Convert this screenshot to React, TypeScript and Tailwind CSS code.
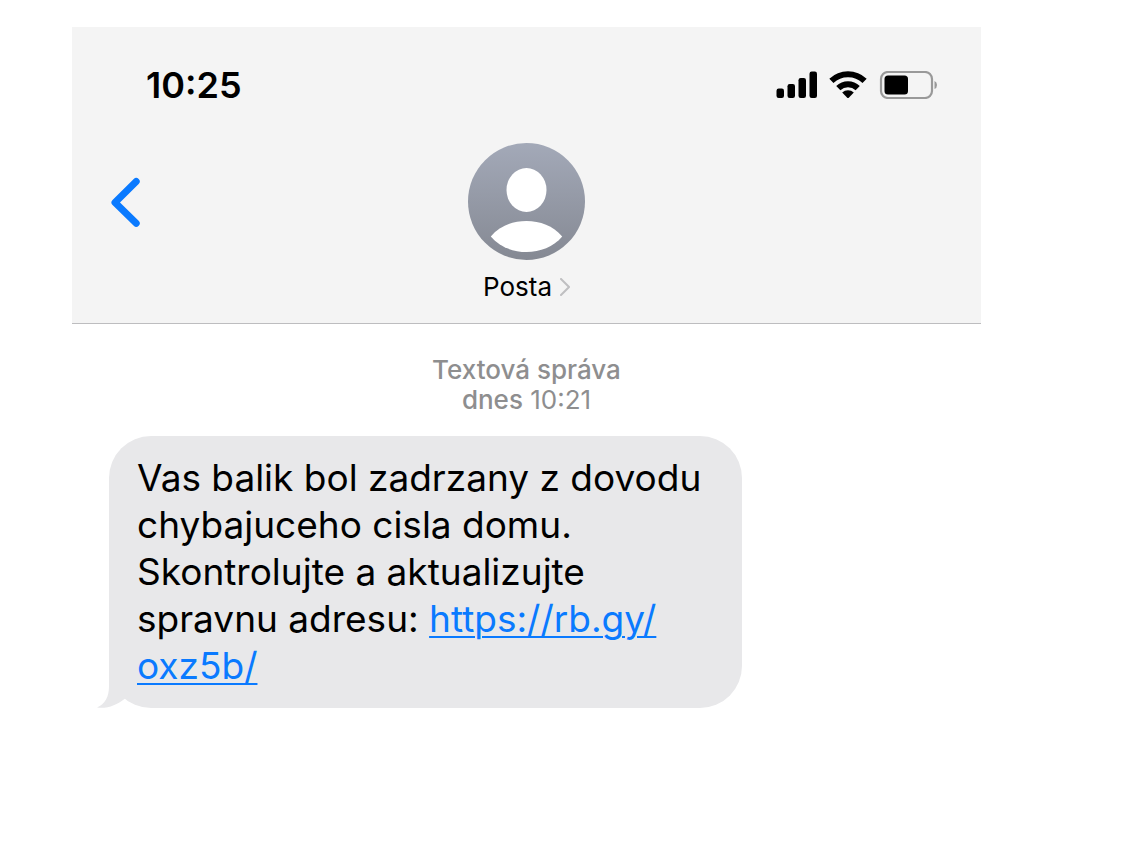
import { useId } from 'react'

function SignalIcon() {
  return (
    <svg width="41" height="28" viewBox="0 0 41 28" fill="#000" aria-hidden="true">
      <rect x="0.5" y="17.5" width="7.5" height="9.5" rx="2.2" />
      <rect x="11.5" y="13" width="7.5" height="14" rx="2.2" />
      <rect x="22.5" y="7" width="7.5" height="20" rx="2.2" />
      <rect x="33.5" y="0.5" width="7.5" height="26.5" rx="2.2" />
    </svg>
  )
}

function WifiIcon() {
  return (
    <svg width="38" height="28" viewBox="0 0 38 28" aria-hidden="true">
      <g fill="none" stroke="#000" strokeWidth="6">
        <path d="M2.4 9.8A24 24 0 0 1 35.6 9.8" />
        <path d="M9.3 17.2A14 14 0 0 1 28.7 17.2" />
      </g>
      <path d="M13.2 21.6A8.6 8.6 0 0 1 24.8 21.6L19.8 26.7Q19 27.4 18.2 26.7Z" />
    </svg>
  )
}

function BatteryIcon() {
  return (
    <svg width="58" height="28" viewBox="0 0 58 28" aria-hidden="true">
      <rect x="2" y="1" width="51" height="26" rx="7" fill="none" stroke="#999" strokeWidth="2.2" />
      <rect x="5.5" y="4.5" width="23.5" height="19" rx="3.5" fill="#000" />
      <path d="M55.5 10Q58 11 58 14T55.5 18Z" fill="#999" />
    </svg>
  )
}

function Avatar() {
  const id = useId()
  return (
    <svg width="117" height="117" viewBox="0 0 117 117" aria-hidden="true">
      <linearGradient id={id} x1="0" y1="0" x2="0" y2="1">
        <stop offset="0" stopColor="#a3a9b8" />
        <stop offset="1" stopColor="#858993" />
      </linearGradient>
      <circle cx="58.5" cy="58.5" r="58.5" fill={`url(#${id})`} />
      <ellipse cx="58.5" cy="47" rx="20" ry="22" fill="#fff" />
      <path
        d="M22.8 93.5C32 82.5 45 78 58.5 78S85 82.5 94.2 93.5C85.5 104 72 109 58.5 109S31.5 104 22.8 93.5Z"
        fill="#fff"
      />
    </svg>
  )
}

function StatusBar() {
  return (
    <div className="flex h-[116px] items-center justify-between pr-11 pl-[74px]">
      <time className="text-[36px] leading-10 font-semibold">10:25</time>
      <div className="flex items-center gap-3">
        <SignalIcon />
        <WifiIcon />
        <BatteryIcon />
      </div>
    </div>
  )
}

function ChatHeader() {
  return (
    <header className="border-b border-[#bdbdbf] bg-[#f4f4f4]">
      <StatusBar />
      <div className="grid h-[180px] grid-cols-[1fr_auto_1fr] items-start">
        <button type="button" aria-label="Back" className="mt-8 ml-9 w-fit">
          <svg width="34" height="54" viewBox="0 0 34 54" fill="none" aria-hidden="true">
            <path
              d="M28.2 6.5L7 27.5L28.2 48.2"
              stroke="#0a7aff"
              strokeWidth="7"
              strokeLinecap="round"
              strokeLinejoin="round"
            />
          </svg>
        </button>
        <button type="button" className="flex flex-col items-center gap-[11px]">
          <Avatar />
          <span className="flex items-center gap-2 text-[26px] leading-8">
            Posta
            <svg width="10" height="18" viewBox="0 0 10 18" fill="none" aria-hidden="true">
              <path d="M1 1L9 9L1 17" stroke="#bfbfc1" strokeWidth="2" strokeLinecap="round" />
            </svg>
          </span>
        </button>
      </div>
    </header>
  )
}

function IncomingMessage() {
  return (
    <div className="relative ml-[37px] w-fit max-w-[633px] rounded-[42px] bg-[#e8e8ea] pt-[18px] pr-8 pb-[19px] pl-7">
      {/* bubble tail */}
      <svg
        className="absolute bottom-0 -left-3"
        width="56"
        height="56"
        viewBox="0 0 56 56"
        fill="#e8e8ea"
        aria-hidden="true"
      >
        <path d="M12 0V34C12 45 8 52 0 55.5C10 57 20 53 27.5 47L56 20V0Z" />
      </svg>
      <p className="relative text-[37px] leading-[47px]">
        Vas balik bol zadrzany z dovodu chybajuceho cisla domu. Skontrolujte a aktualizujte spravnu adresu:{' '}
        <a href="#" className="text-[#0a7aff] underline decoration-2 underline-offset-4">
          https://rb.gy/<wbr />oxz5b/
        </a>
      </p>
    </div>
  )
}

export default function App() {
  return (
    <main className="min-h-screen bg-white pt-[27px] pr-36 pb-8 pl-[72px] font-['Inter',sans-serif] text-black">
      <ChatHeader />
      <p className="pt-[31px] pb-[21px] text-center text-[26px] leading-[30px] text-[#8e8e8f]">
        <span className="font-medium">Textová správa</span>
        <br />
        <span className="font-medium">dnes</span> 10:21
      </p>
      <IncomingMessage />
    </main>
  )
}
